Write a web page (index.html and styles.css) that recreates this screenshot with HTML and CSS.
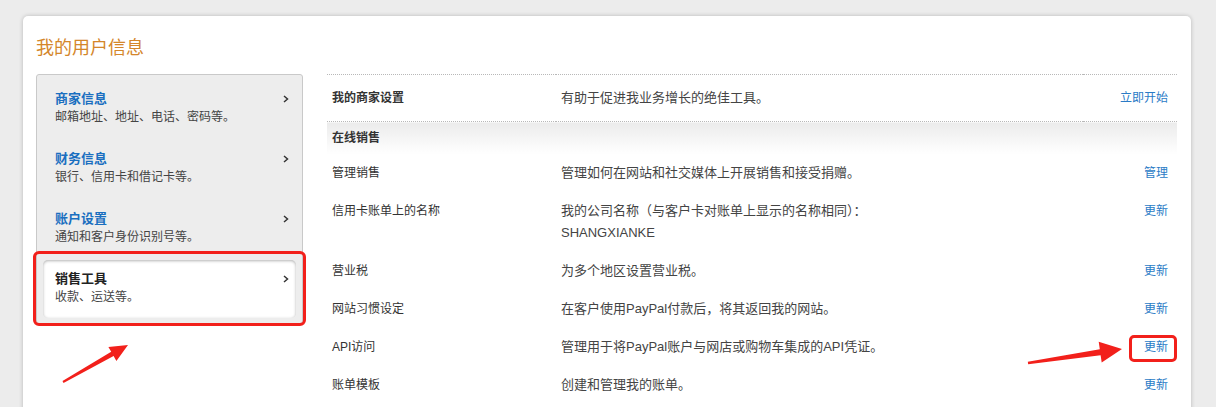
FILE: index.html
```html
<!DOCTYPE html>
<html lang="zh-CN">
    <head>
        <meta charset="UTF-8" />
        <meta name="viewport" content="width=device-width, initial-scale=1.0" />
        <title>我的用户信息</title>
        <link rel="stylesheet" href="styles.css">
    </head>
    <body>
        <div class="page">
            <div class="card">
                <h1 class="cardTitle">我的用户信息</h1>
                <div class="cardBody">
                    <!-- Side navigation -->
                    <ul class="sideNav">
                        <li class="navItem">
                            <div class="navHead">
                                <span class="navTitle">商家信息</span>
                                <svg class="chevron" width="6" height="8" viewBox="0 0 6 8"><polyline points="1,1 4.5,4 1,7" /></svg>
                            </div>
                            <div class="navSub">邮箱地址、地址、电话、密码等。</div>
                        </li>
                        <li class="navItem">
                            <div class="navHead">
                                <span class="navTitle">财务信息</span>
                                <svg class="chevron" width="6" height="8" viewBox="0 0 6 8"><polyline points="1,1 4.5,4 1,7" /></svg>
                            </div>
                            <div class="navSub">银行、信用卡和借记卡等。</div>
                        </li>
                        <li class="navItem">
                            <div class="navHead">
                                <span class="navTitle">账户设置</span>
                                <svg class="chevron" width="6" height="8" viewBox="0 0 6 8"><polyline points="1,1 4.5,4 1,7" /></svg>
                            </div>
                            <div class="navSub">通知和客户身份识别号等。</div>
                        </li>
                        <li class="navItem navItemActive">
                            <div class="navHead">
                                <span class="navTitle">销售工具</span>
                                <svg class="chevron" width="6" height="8" viewBox="0 0 6 8"><polyline points="1,1 4.5,4 1,7" /></svg>
                            </div>
                            <div class="navSub">收款、运送等。</div>
                        </li>
                    </ul>

                    <!-- Settings table -->
                    <table class="settingsTable">
                        <tr class="rowIntro">
                            <td class="cellLabel cellStrong">我的商家设置</td>
                            <td class="cellDesc">有助于促进我业务增长的绝佳工具。</td>
                            <td class="cellAction"><a href="#">立即开始</a></td>
                        </tr>
                        <tr class="rowSection">
                            <td colspan="3">在线销售</td>
                        </tr>
                        <tr>
                            <td class="cellLabel">管理销售</td>
                            <td class="cellDesc">管理如何在网站和社交媒体上开展销售和接受捐赠。</td>
                            <td class="cellAction"><a href="#">管理</a></td>
                        </tr>
                        <tr>
                            <td class="cellLabel">信用卡账单上的名称</td>
                            <td class="cellDesc">我的公司名称（与客户卡对账单上显示的名称相同）：<br>SHANGXIANKE</td>
                            <td class="cellAction"><a href="#">更新</a></td>
                        </tr>
                        <tr>
                            <td class="cellLabel">营业税</td>
                            <td class="cellDesc">为多个地区设置营业税。</td>
                            <td class="cellAction"><a href="#">更新</a></td>
                        </tr>
                        <tr>
                            <td class="cellLabel">网站习惯设定</td>
                            <td class="cellDesc">在客户使用PayPal付款后，将其返回我的网站。</td>
                            <td class="cellAction"><a href="#">更新</a></td>
                        </tr>
                        <tr>
                            <td class="cellLabel">API访问</td>
                            <td class="cellDesc">管理用于将PayPal账户与网店或购物车集成的API凭证。</td>
                            <td class="cellAction"><a href="#" class="linkMarked">更新</a></td>
                        </tr>
                        <tr>
                            <td class="cellLabel">账单模板</td>
                            <td class="cellDesc">创建和管理我的账单。</td>
                            <td class="cellAction"><a href="#">更新</a></td>
                        </tr>
                    </table>
                </div>
            </div>
        </div>

        <!-- Red annotation arrows drawn over the page -->
        <svg class="annotations" width="1216" height="407" viewBox="0 0 1216 407">
            <polygon points="62.5,381.1 111.2,351.7 108.4,346.9 128,345 116.4,360.9 113.6,356.1 63.5,382.9" />
            <polygon points="1027.8,361.8 1099.8,349.2 1098.7,341.8 1122,349 1101.7,362.6 1100.6,355.2 1028.2,364.2" />
        </svg>
    </body>
</html>
```

FILE: styles.css
```css
body {
    margin: 0;
    background: #ececec;
    font-family: "Liberation Sans", "Noto Sans CJK SC", sans-serif;
    color: #333;
    position: relative;
    overflow: hidden;
}

a {
    color: #2a7bc6;
    text-decoration: none;
}

/* Card */
.page {
    padding: 16px 25px 0 23px;
}
.card {
    background: #fff;
    border-radius: 5px;
    box-shadow: 0 0 4px rgba(0, 0, 0, 0.22);
    padding: 20px 14px 40px 13px;
}
.cardTitle {
    margin: 0 0 14px;
    font-size: 18px;
    line-height: 24px;
    font-weight: normal;
    color: #d4862a;
}
.cardBody {
    display: flex;
    align-items: flex-start;
    gap: 24px;
}

/* Side navigation */
.sideNav {
    list-style: none;
    margin: 0;
    width: 267px;
    box-sizing: border-box;
    padding: 5px 6px;
    background: #ededed;
    border: 1px solid #c9c9c9;
    border-radius: 3px;
    flex-shrink: 0;
}
.navItem {
    padding: 10px 7px 12px 12px;
    position: relative;
}
.navItem + .navItem {
    margin-top: 2px;
}
.navHead {
    display: flex;
    align-items: center;
    justify-content: space-between;
}
.navTitle {
    font-size: 13px;
    line-height: 18px;
    font-weight: bold;
    color: #1a6fc0;
}
.navSub {
    font-size: 12px;
    line-height: 18px;
    color: #444;
}
.chevron polyline {
    fill: none;
    stroke: #333;
    stroke-width: 1.5;
}
.navItemActive {
    background: #fff;
    border-radius: 5px;
    box-shadow: inset 0 1px 3px rgba(0, 0, 0, 0.3);
}
.navItemActive .navTitle {
    color: #222;
}
.navItemActive::after {
    content: '';
    position: absolute;
    left: -10px;
    right: -10px;
    top: -9px;
    bottom: -8px;
    border: 3px solid #f2201b;
    border-radius: 6px;
}

/* Settings table */
.settingsTable {
    flex: 1;
    border-collapse: collapse;
    table-layout: fixed;
}
.settingsTable td {
    padding: 8px 5px;
    line-height: 22px;
    vertical-align: top;
}
.cellLabel {
    width: 219px;
    font-size: 12px;
    color: #333;
}
.cellStrong {
    font-weight: bold;
}
.cellDesc {
    font-size: 13px;
    color: #444;
}
.settingsTable .cellAction {
    width: 80px;
    padding-right: 9px;
    text-align: right;
    font-size: 12px;
}
.settingsTable .rowIntro td {
    padding-top: 12px;
    padding-bottom: 12px;
    border-top: 1px dotted #b8b8b8;
    border-bottom: 1px dotted #b8b8b8;
}
.settingsTable .rowSection td {
    padding: 5px;
    font-size: 12px;
    font-weight: bold;
    color: #333;
    background: linear-gradient(#ebebeb, #ffffff);
}
.linkMarked {
    display: inline-block;
    position: relative;
}
.linkMarked::after {
    content: '';
    position: absolute;
    left: -15px;
    right: -9px;
    top: -1px;
    bottom: -4px;
    border: 3px solid #f2201b;
    border-radius: 5px;
}

/* Annotation arrows */
.annotations {
    position: absolute;
    top: 0;
    left: 0;
    pointer-events: none;
}
.annotations polygon {
    fill: #f2201b;
}
```
